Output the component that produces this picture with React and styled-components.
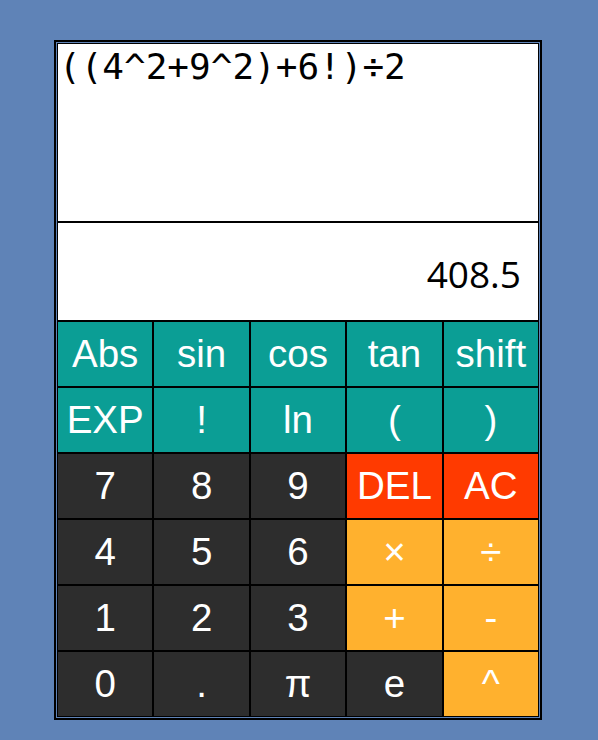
import React from "react";
import styled, { createGlobalStyle } from "styled-components";

const Global = createGlobalStyle`
  html, body { margin: 0; padding: 0; background: #5f83b7; }
  body { width: 598px; height: 740px; }
  * { box-sizing: border-box; }
`;

const Page = styled.div`
  padding: 40px 0 0 54px;
`;

const Frame = styled.div`
  width: 488px;
  border: 2px solid #000;
  padding: 1px;
  display: flex;
  flex-direction: column;
`;

const Expression = styled.div`
  height: 179px;
  border: 1px solid #000;
  background: #fff;
  padding: 2px 1px;
  font-family: "DejaVu Sans Mono", "Liberation Mono", monospace;
  font-size: 36px;
  line-height: 42px;
  color: #000;
`;

const Result = styled.div`
  height: 99px;
  border: 1px solid #000;
  background: #fff;
  display: flex;
  align-items: center;
  justify-content: flex-end;
  padding: 3px 17px 0 0;
  font-family: "Open Sans", "Noto Sans", sans-serif;
  font-size: 37px;
  color: #000;
`;

const Keys = styled.div`
  display: grid;
  grid-template-columns: repeat(5, 1fr);
`;

const colors = {
  fn: "#0b9e95",
  num: "#2d2d2d",
  del: "#ff3a00",
  op: "#ffb12e",
};

const Key = styled.div`
  height: 66px;
  border: 1px solid #000;
  background: ${(p) => colors[p.$kind]};
  color: #fff;
  display: flex;
  align-items: center;
  justify-content: center;
  font-family: "Liberation Sans", Arial, sans-serif;
  font-size: 38.5px;
  user-select: none;
`;

const rows = [
  [["Abs", "fn"], ["sin", "fn"], ["cos", "fn"], ["tan", "fn"], ["shift", "fn"]],
  [["EXP", "fn"], ["!", "fn"], ["ln", "fn"], ["(", "fn"], [")", "fn"]],
  [["7", "num"], ["8", "num"], ["9", "num"], ["DEL", "del"], ["AC", "del"]],
  [["4", "num"], ["5", "num"], ["6", "num"], ["×", "op"], ["÷", "op"]],
  [["1", "num"], ["2", "num"], ["3", "num"], ["+", "op"], ["-", "op"]],
  [["0", "num"], [".", "num"], ["π", "num"], ["e", "num"], ["^", "op"]],
];

export default function App() {
  return (
    <Page>
      <Global />
      <Frame>
        <Expression>((4^2+9^2)+6!)÷2</Expression>
        <Result>408.5</Result>
        <Keys>
          {rows.flat().map(([label, kind], i) => (
            <Key key={i} $kind={kind}>
              {label}
            </Key>
          ))}
        </Keys>
      </Frame>
    </Page>
  );
}
